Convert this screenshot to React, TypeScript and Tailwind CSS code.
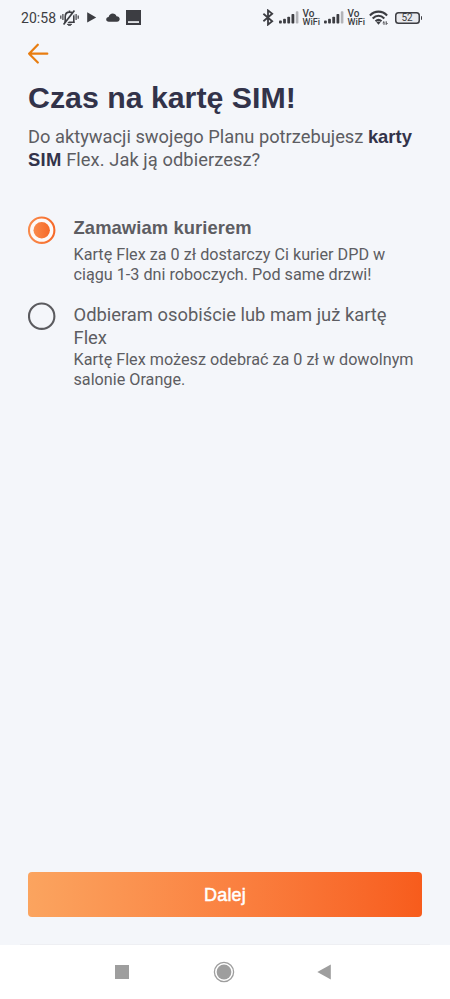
import { useState } from 'react';
import clsx from 'clsx';

interface DeliveryOption {
  id: string;
  title: string;
  lines: string[];
  description: string[];
}

const options: DeliveryOption[] = [
  {
    id: 'courier',
    title: 'Zamawiam kurierem',
    lines: ['Zamawiam kurierem'],
    description: ['Kartę Flex za 0 zł dostarczy Ci kurier DPD w', 'ciągu 1-3 dni roboczych. Pod same drzwi!'],
  },
  {
    id: 'pickup',
    title: 'Odbieram osobiście',
    lines: ['Odbieram osobiście lub mam już kartę', 'Flex'],
    description: ['Kartę Flex możesz odebrać za 0 zł w dowolnym', 'salonie Orange.'],
  },
];

function BellOffIcon() {
  return (
    <svg width="19" height="18" viewBox="0 0 19 18" fill="none" stroke="#3c3d42" strokeWidth="1.6">
      <path d="M4.2 13.2h10.6M5.2 13V7.7C5.2 5 7 3.1 9.5 3.1s4.3 1.9 4.3 4.6V13M9.5 3V1.4" />
      <path d="M7.3 15.2c.6 1.7 3.8 1.7 4.4 0Z" fill="#3c3d42" strokeWidth=".8" />
      <path d="M.8 6.4v3.4M2.9 5v6M18.2 6.4v3.4M16.1 5v6" strokeWidth="1.2" />
      <path d="M5.2 15.4 15.6 1.8" stroke="#f4f6fa" strokeWidth="2" />
      <path d="M3.6 15.4 14.4 1.4" strokeWidth="1.7" />
    </svg>
  );
}

function SignalIcon() {
  return (
    <svg width="20" height="13" viewBox="0 0 20 13" fill="#3c3d42">
      <rect x="0" y="9.5" width="2.8" height="3" rx=".8" />
      <rect x="4.1" y="7.8" width="2.8" height="4.7" rx=".8" />
      <rect x="8.3" y="5.7" width="2.8" height="6.8" rx=".8" />
      <rect x="12.5" y="3" width="2.8" height="9.5" rx=".8" />
      <rect x="16.8" y=".3" width="2.6" height="12.2" rx=".8" fill="#b3b4b8" />
    </svg>
  );
}

function VoWifi() {
  return (
    <div className="w-[18px] text-[9px] leading-[9px] font-medium whitespace-nowrap text-[#3c3d42]">
      <div className="text-[10px]">Vo</div>
      <div>WiFi</div>
    </div>
  );
}

function WifiIcon() {
  return (
    <svg width="20" height="16" viewBox="0 0 20 16" fill="none" stroke="#3c3d42" strokeWidth="2.1">
      <path d="M.9 5.4c5-5 12.2-5 17.2 0M3.7 8.4c3.5-3.4 8.1-3.4 11.6 0M6.5 11.2c2-1.8 4-1.8 6 0" />
      <path d="m7.4 12.3 2.1 2.4 2.1-2.4c-1.3-1-2.9-1-4.2 0Z" fill="#3c3d42" stroke="none" />
      <path d="M15 14.8v-3.2l-1.3 1.3M17.2 11.3v3.2l1.3-1.3" strokeWidth="1" />
    </svg>
  );
}

function StatusBar() {
  return (
    <div className="flex h-[35px] items-center pl-[21px] text-[#3c3d42]">
      <span className="w-[39px] pt-px text-[14px] tracking-[0.05px] whitespace-nowrap">20:58</span>
      <BellOffIcon />
      <svg className="ml-[7px]" width="11" height="11" viewBox="0 0 11 11" fill="#3c3d42">
        <path d="M1.2.3v10.2l9-5.1Z" />
      </svg>
      <svg className="ml-[9px]" width="14" height="9" viewBox="0 0 14 9" fill="#3c3d42">
        <path d="M2.8 8.7C1.2 8.7.2 7.8.2 6.5S1.2 4.2 2.6 4C3.2 2 4.7.6 6.7.6c1.8 0 3.2 1 3.8 2.7 1.9 0 3.2 1.1 3.2 2.8 0 1.6-1.1 2.6-2.7 2.6Z" />
      </svg>
      <svg className="ml-[6px]" width="15" height="15" viewBox="0 0 15 15">
        <path fill="#3c3d42" d="M0 0h15v15H0Z" />
        <path fill="#f4f6fa" d="M2 11.2h11v1.7H2Z" />
      </svg>

      <svg className="ml-[121px]" width="12" height="17" viewBox="0 0 12 17" fill="none" stroke="#3c3d42" strokeWidth="1.8">
        <path d="m1.4 4.8 8.8 7.4-4.2 3.4V1.4l4.2 3.4-8.8 7.4" />
      </svg>
      <div className="ml-[5px] flex items-center gap-[3.5px]">
        <SignalIcon />
        <VoWifi />
        <SignalIcon />
        <VoWifi />
      </div>
      <span className="ml-[3px]"><WifiIcon /></span>
      <div className="ml-[6px] flex items-center">
        <div className="flex h-[12px] w-[25px] items-center justify-center rounded-[3.5px] bg-[#e9eaee] text-[10px] leading-none shadow-[inset_0_0_0_1.5px_#3c3d42]">
          52
        </div>
        <div className="ml-px h-[4px] w-[1.5px] rounded-r bg-[#3c3d42]" />
      </div>
    </div>
  );
}

function Radio({ checked }: { checked: boolean }) {
  return (
    <svg className="shrink-0" width="28" height="28" viewBox="0.5 -0.2 28 28" fill="none">
      <defs>
        <linearGradient id="radio-fill" x1="0" y1="0" x2="1" y2="0">
          <stop stopColor="#f98b4c" />
          <stop offset="1" stopColor="#f66928" />
        </linearGradient>
      </defs>
      <circle cx="14.2" cy="14" r="12.7" stroke={checked ? 'url(#radio-fill)' : '#5b5b5f'} strokeWidth="2.1" fill={checked ? '#fdf9f8' : 'none'} />
      {checked && <circle cx="14.2" cy="14" r="8.2" fill="url(#radio-fill)" />}
    </svg>
  );
}

function NavigationBar() {
  return (
    <div className="flex h-[54px] items-center bg-white">
      <div className="ml-[115px] size-[14px] bg-[#9e9e9e]" />
      <svg className="ml-[84px]" width="22" height="22" viewBox="0 0 22 22">
        <circle cx="11" cy="11" r="9.6" fill="none" stroke="#9e9e9e" strokeWidth="1.3" />
        <circle cx="11" cy="11" r="7.4" fill="#9e9e9e" />
      </svg>
      <svg className="ml-[82px]" width="14" height="16" viewBox="0 0 14 16" fill="#9e9e9e">
        <path d="M13.8.4v15.2L.3 8Z" />
      </svg>
    </div>
  );
}

export default function App() {
  const [selected, setSelected] = useState('courier');

  return (
    <div className="flex h-[999px] w-[450px] flex-col overflow-hidden bg-[#f4f6fa] font-['Roboto',sans-serif] text-[#5d5d62]">
      <StatusBar />

      <main className="flex flex-1 flex-col px-[28px]">
        <button aria-label="Wstecz" className="mt-[8px] h-[21px] w-[21px]">
          <svg width="21" height="21" viewBox="0 0 21 21" fill="none" stroke="#e87d10" strokeWidth="2.2" strokeLinecap="round" strokeLinejoin="round">
            <path d="M9.8 1.7 1.1 10.7l8.7 8.8M1.1 10.7h18.2" />
          </svg>
        </button>

        <h1 className="mt-[16px] text-[30.3px] leading-[36px] font-bold whitespace-nowrap text-[#32334a] font-['Liberation_Sans',sans-serif]">
          Czas na kartę SIM!
        </h1>
        <p className="mt-[10px] text-[18.3px] leading-[22.5px] whitespace-nowrap">
          Do aktywacji swojego Planu potrzebujesz{' '}
          <b className="text-[18.4px] text-[#32334a] font-['Liberation_Sans',sans-serif]">karty</b>
          <br />
          <b className="text-[18.4px] tracking-[0.3px] text-[#32334a] font-['Liberation_Sans',sans-serif]">SIM</b>{' '}
          <span className="tracking-[0.07px]">Flex. Jak ją odbierzesz?</span>
        </p>

        <div role="radiogroup" className="mt-[45px] flex flex-col gap-[16.5px]">
          {options.map((option) => {
            const checked = option.id === selected;
            return (
              <div
                key={option.id}
                role="radio"
                aria-checked={checked}
                aria-label={option.title}
                onClick={() => setSelected(option.id)}
                className="flex gap-[17.5px] whitespace-nowrap"
              >
                <Radio checked={checked} />
                <div className="pt-px">
                  <div
                    className={clsx(
                      'text-[18.38px]',
                      checked
                        ? "mb-[5px] leading-[22.5px] tracking-[0.1px] font-bold font-['Liberation_Sans',sans-serif]"
                        : 'mb-[0.5px] leading-[23px]'
                    )}
                  >
                    {option.lines.map((line) => (
                      <div key={line}>{line}</div>
                    ))}
                  </div>
                  <div className="text-[16.2px] leading-[20.5px]">
                    {option.description.map((line) => (
                      <div key={line}>{line}</div>
                    ))}
                  </div>
                </div>
              </div>
            );
          })}
        </div>

        <button className="mt-auto h-[45px] w-full rounded-[4px] bg-gradient-to-r from-[#fba45f] to-[#f75c1c] pt-[2px] text-[18px] tracking-[0.2px] text-white [-webkit-text-stroke:0.5px_white] font-['Liberation_Sans',sans-serif]">
          Dalej
        </button>
        <div className="-mx-[8px] mt-[27px] h-px bg-[#eeeff3]" />
      </main>

      <NavigationBar />
    </div>
  );
}
